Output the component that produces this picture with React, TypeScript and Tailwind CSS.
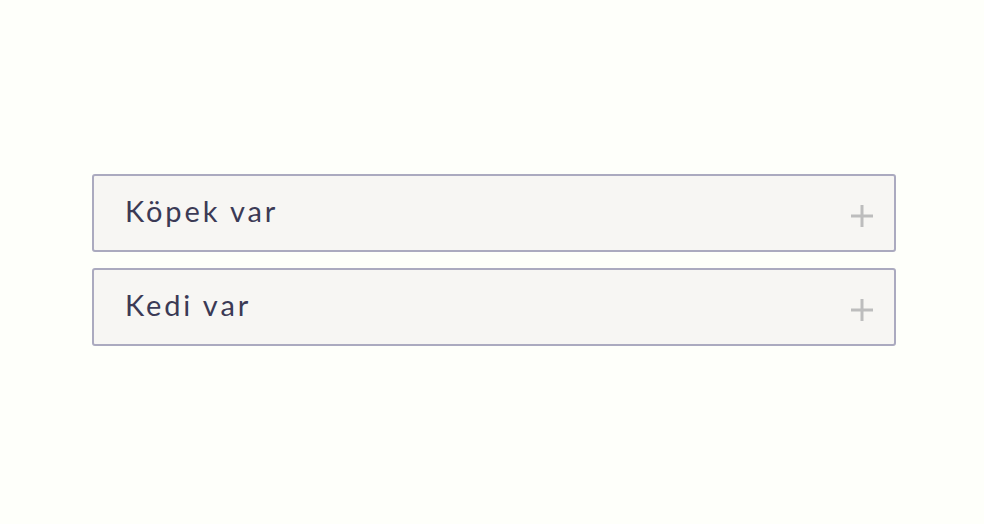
import React from 'react';

const items = ['Köpek var', 'Kedi var'];

function PlusIcon() {
  return (
    <svg width="24" height="24" viewBox="0 0 24 24" className="shrink-0">
      <path d="M12 1v22M1 12h22" stroke="#bdbdbd" strokeWidth="3" />
    </svg>
  );
}

export default function App() {
  return (
    <div className="min-h-screen bg-[#fefffa] pl-[92px] pr-[88px] pt-[174px]" style={{ fontFamily: 'Lato, "Noto Sans", sans-serif' }}>
      <div className="flex flex-col gap-[16px]">
        {items.map((label) => (
          <div
            key={label}
            className="flex h-[78px] items-center justify-between rounded-[3px] border-2 border-[#abaabf] bg-[#f7f6f3] pl-[31px] pr-[20px]"
          >
            <span className="text-[29px] tracking-[0.1em] text-[#3b3a55] -mt-[4px]">{label}</span>
            <span className="mt-[6px]">
              <PlusIcon />
            </span>
          </div>
        ))}
      </div>
    </div>
  );
}
